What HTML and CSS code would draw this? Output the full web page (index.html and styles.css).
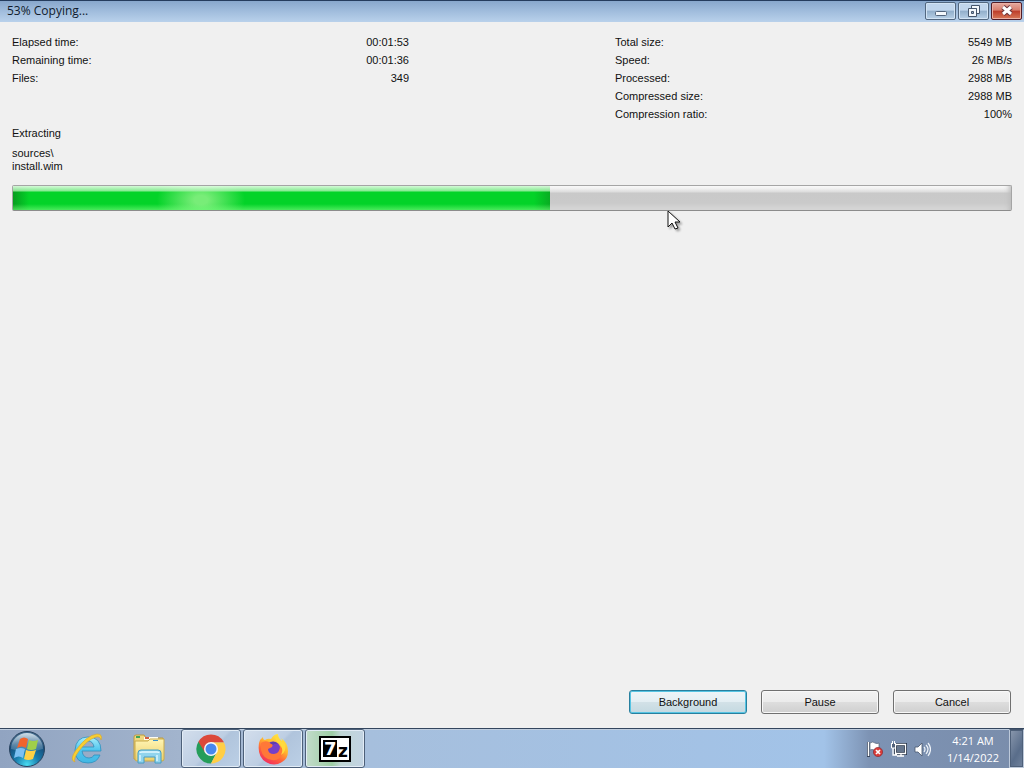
FILE: index.html
```html
<!DOCTYPE html>
<html lang="en">
<head>
<meta charset="utf-8">
<title>53% Copying...</title>
<link rel="stylesheet" href="styles.css">
</head>
<body>
<header class="titlebar">
  <h1 class="title">53% Copying...</h1>
  <div class="window-controls">
    <button class="wbtn" aria-label="Minimize"><svg width="30" height="16" viewBox="0 0 30 16"><rect x="9.500" y="8.500" width="11" height="4" rx="1" fill="#f4f8fc" stroke="#52647c"/></svg></button>
    <button class="wbtn" aria-label="Restore"><svg width="30" height="16" viewBox="0 0 30 16"><g fill="#f4f8fc" stroke="#46566c"><path d="M12.500 2.500h8v8h-8z"/><path d="M15.500 5.500h2v2h-2z" fill="#91aac8"/><path d="M9.500 5.500h8v8h-8z"/><path d="M12.500 8.500h2v2h-2z" fill="#91aac8"/></g></svg></button>
    <button class="wbtn wbtn-close" aria-label="Close"><svg width="29" height="16" viewBox="0 0 29 16"><path d="M11 4l8 7M19 4l-8 7" stroke="#693238" stroke-width="5"/><path d="M11 4l8 7M19 4l-8 7" stroke="#fff" stroke-width="3"/></svg></button>
  </div>
</header>
<main class="dialog">
  <section class="stats">
    <dl class="stat-list">
      <div class="stat"><dt>Elapsed time:</dt><dd>00:01:53</dd></div>
      <div class="stat"><dt>Remaining time:</dt><dd>00:01:36</dd></div>
      <div class="stat"><dt>Files:</dt><dd>349</dd></div>
    </dl>
    <dl class="stat-list">
      <div class="stat"><dt>Total size:</dt><dd>5549 MB</dd></div>
      <div class="stat"><dt>Speed:</dt><dd>26 MB/s</dd></div>
      <div class="stat"><dt>Processed:</dt><dd>2988 MB</dd></div>
      <div class="stat"><dt>Compressed size:</dt><dd>2988 MB</dd></div>
      <div class="stat"><dt>Compression ratio:</dt><dd>100%</dd></div>
    </dl>
  </section>
  <p class="status">Extracting</p>
  <p class="path">sources\<br>install.wim</p>
  <div class="progress" role="progressbar" aria-label="Copying" aria-valuemin="0" aria-valuemax="100" aria-valuenow="53">
    <div class="progress-fill" style="width: 53.8%"></div>
  </div>
  <div class="actions">
    <button class="btn btn-default">Background</button>
    <button class="btn">Pause</button>
    <button class="btn">Cancel</button>
  </div>
</main>
<footer class="taskbar">
  <button class="start" aria-label="Start">
    <svg width="38" height="38" viewBox="0 0 38 38">
      <defs>
        <radialGradient id="orb" cx=".5" cy=".95" r=".85"><stop offset="0" stop-color="#49dcf2"/><stop offset=".4" stop-color="#197eae"/><stop offset=".8" stop-color="#174c79"/><stop offset="1" stop-color="#426b8e"/></radialGradient>
        <linearGradient id="gloss" x2="0" y2="1"><stop offset="0" stop-color="#e7f2f8" stop-opacity=".85"/><stop offset="1" stop-color="#9fc0d6" stop-opacity=".2"/></linearGradient>
      </defs>
      <circle cx="19" cy="19" r="17.500" fill="url(#orb)" stroke="#29435f"/>
      <path d="M3 19a16 16 0 0 1 32 0q-16 5-32 0z" fill="url(#gloss)"/>
      <path d="M12 9q4-3 8 0l-2 9q-4-3-9 0z" fill="#f1642c"/>
      <path d="M21 10q4 2 9 0l-2 9q-5 2-9 0z" fill="#a0cf4a"/>
      <path d="M8 19q5-2 9 0l-2 9q-4-3-9 0z" fill="#7cc0f2"/>
      <path d="M18 20q5 2 10 0l-3 9q-5 2-9 0z" fill="#ffd144"/>
    </svg>
  </button>
  <nav class="tasks">
    <button class="task" aria-label="Internet Explorer">
      <svg width="34" height="34" viewBox="0 0 34 34">
        <defs><linearGradient id="ie" x2="0" y2="1"><stop offset="0" stop-color="#a8edfa"/><stop offset=".5" stop-color="#4fc5ee"/><stop offset="1" stop-color="#42b7e4"/></linearGradient></defs>
        <path d="M31 19H12q1 7 7 7 4 0 5-3h6q-3 8-12 8Q5 31 5 18 6 5 18 5q13 0 13 14zM12 15h12q-1-6-6-6t-6 6z" fill="url(#ie)" stroke="#2d8fbd" stroke-width=".8" fill-rule="evenodd"/>
        <path d="M5 30Q-1 28 6 18 17 3 27 2q6 0 4 6-1-4-5-3Q17 8 9 19 3 27 5 30z" fill="#f8ce31" stroke="#d6a52a" stroke-width=".6"/>
      </svg>
    </button>
    <button class="task" aria-label="Windows Explorer">
      <svg width="34" height="34" viewBox="0 0 34 34">
        <defs><linearGradient id="folder" x2="0" y2="1"><stop offset="0" stop-color="#fff5b5"/><stop offset="1" stop-color="#edcf69"/></linearGradient></defs>
        <path d="M2 5q0-2 2-2h8l2 3h17v21H2z" fill="#efd780" stroke="#bd9b42"/>
        <path d="M4 4h4v2H4z" fill="#40a559"/><path d="M12 5h14v3H12z" fill="#fffdf0"/><path d="M13 5h4v2h-4z" fill="#d26042"/>
        <path d="M3 9h13l2-2h14v20q0 2-2 2H5q-2 0-2-2z" fill="url(#folder)" stroke="#c9aa4c"/>
        <path d="M21 8h5v1h-5z" fill="#3c91cb"/>
        <path d="M6 31V21q0-3 3-3h17q3 0 3 3v10h-6v-6H12v6z" fill="#91d4ed" stroke="#459dc4"/>
        <path d="M8 21q0-1 2-1h15q2 0 2 1" fill="none" stroke="#e1f7ff" stroke-width="1.500"/>
        <path d="M8 23v6m17-6v6" stroke="#c6edfa" stroke-width="2"/>
      </svg>
    </button>
    <button class="task task-open" aria-label="Google Chrome">
      <svg width="30" height="30" viewBox="0 0 30 30">
        <path d="M15 15 2.400 7.700A14.500 14.500 0 0 1 27.600 7.700L28 8.500H15z" fill="#dc493b"/>
        <path d="M15 15 2.400 7.700A14.500 14.500 0 0 0 15 29.500L21 18z" fill="#259d5a"/>
        <path d="M15 8.500h13A14.500 14.500 0 0 1 15 29.500L21 18z" fill="#ffce45"/>
        <path d="M2.400 7.700 9 18.500 15 8.500z" fill="#dc493b"/>
        <circle cx="15" cy="15" r="7" fill="#f6f7fa"/><circle cx="15" cy="15" r="5.500" fill="#4788ee"/>
      </svg>
    </button>
    <button class="task task-open" aria-label="Firefox">
      <svg width="32" height="32" viewBox="0 0 32 32">
        <defs><linearGradient id="fox" x1=".8" y1="0" x2=".25" y2="1"><stop offset="0" stop-color="#fff14c"/><stop offset=".4" stop-color="#ffb72e"/><stop offset=".68" stop-color="#ff623a"/><stop offset="1" stop-color="#ef2665"/></linearGradient></defs>
        <path d="M2 10q1-4 4-6 0 3 2 3 3-2 6-1Q17 1 21 1q0 4 4 7 0-2-1-3 7 5 7 13 0 8-6 11-8 5-16 0Q0 24 2 10z" fill="url(#fox)"/>
        <circle cx="16" cy="16" r="7.500" fill="#7440c8"/>
        <path d="M4 10q4-3 8-1 1 2 4 2l-1 3-4 2q0 5 6 5 6-1 6-8 5 4 2 9-3 6-10 5Q6 26 4 17z" fill="#ff7838"/>
        <path d="M18 3q0 5 5 8 4 6 1 11 6-4 4-11-2-3-4-3-3-2-4-6z" fill="#ffda3c"/>
        <path d="M13 10q4-3 8 1-4-1-5 1z" fill="#5c3daf"/>
      </svg>
    </button>
    <button class="task task-open task-busy" aria-label="7-Zip">
      <svg width="32" height="26" viewBox="0 0 32 26">
        <rect width="32" height="26" fill="#000"/><rect x="2" y="2" width="28" height="22" fill="#fff"/><rect x="4" y="4" width="14" height="17" fill="#000"/>
        <text x="5" y="19" class="zip-seven">7</text><text x="19" y="21" class="zip-z">z</text>
      </svg>
    </button>
  </nav>
  <div class="tray">
    <svg width="17" height="18" viewBox="0 0 17 18"><path d="M2.500 2v15" stroke="#39465c" stroke-width="3"/><path d="M2.500 2v14" stroke="#fff" stroke-width="1.500"/><path d="M4 3q3-2 5 0 2 1 4 0v7q-3 1-5 0-2-1-4 0z" fill="#fff" stroke="#536177" stroke-width=".7"/><circle cx="12" cy="12" r="4.600" fill="#d93c39" stroke="#8e2932" stroke-width=".7"/><path d="m10 10 4 4m0-4-4 4" stroke="#fff" stroke-width="1.700"/></svg>
    <svg width="17" height="18" viewBox="0 0 17 18"><path d="M5.500 4.500h10v9h-10z" fill="#66768d" stroke="#29364a" stroke-width="3"/><path d="M5.500 4.500h10v9h-10zM7 16h7m-3-2v2M3 8v7h4" fill="none" stroke="#fff" stroke-width="1.300"/><path d="M1.500 3v5h4V3M2.500 1v3m2-3v3" fill="#53637b" stroke="#fff"/></svg>
    <svg width="17" height="18" viewBox="0 0 17 18"><path d="M1 7h3l4-4v13l-4-4H1z" fill="#fff" stroke="#47566d" stroke-width=".8"/><path d="M10 7q2 2 0 5m2-7q4 4 0 9m2-11q5 6 0 13" fill="none" stroke="#eef3f9" stroke-width="1.200"/></svg>
  </div>
  <div class="clock"><time>4:21 AM</time><time>1/14/2022</time></div>
  <button class="show-desktop" aria-label="Show desktop"></button>
</footer>
<svg class="cursor" width="16" height="22" viewBox="0 0 16 22" aria-hidden="true"><path d="M1 1v16l4-4 3 6 3-1-3-6h5z" fill="#fff" stroke="#111"/></svg>
</body>
</html>
```
FILE: styles.css
```css
* { box-sizing: border-box; }

body {
  margin: 0;
  min-height: 100vh;
  display: flex;
  flex-direction: column;
  background: #f0f0f0;
  color: #111;
  font: 11px/18px "Liberation Sans", Arial, sans-serif;
}

h1, p, dl, dd { margin: 0; }
button { padding: 0; font: inherit; color: inherit; }
svg { display: block; }

.titlebar {
  display: flex;
  justify-content: space-between;
  height: 22px;
  padding-left: 7px;
  border-top: 1px solid #253c5d;
  background: linear-gradient(#88a7cc, #a1bddd 50%, #b9d1eb);
}

.title {
  font: 12px/20px "Open Sans", "Noto Sans", sans-serif;
  color: #101b2c;
}

.window-controls {
  display: flex;
  gap: 2px;
  padding: 1px 2px 2px 0;
}

.wbtn {
  width: 31px;
  height: 18px;
  display: grid;
  place-items: center;
  border: 1px solid #52677f;
  border-radius: 2px;
  background: linear-gradient(#c0d5ec 45%, #91aeca 50%, #b8d0e7);
  box-shadow: inset 0 0 0 1px #d2e3f4;
}

.wbtn-close {
  border-color: #511d27;
  background: linear-gradient(#e5aaa0, #d87e6d 45%, #bd3c29 50%, #d87958);
  box-shadow: inset 0 0 0 1px #eab0a4;
}

.dialog {
  flex: 1;
  display: flex;
  flex-direction: column;
  padding: 11px 12px 14px;
}

.stats {
  display: grid;
  grid-template-columns: 1fr 1fr;
  column-gap: 206px;
}

.stat { display: flex; justify-content: space-between; }
.status { margin-top: 1px; }
.path { margin-top: 5px; line-height: 13px; }

.progress {
  height: 26px;
  margin-top: 12px;
  border: 1px solid #a5a5a5;
  border-bottom-color: #8c8c8c;
  border-radius: 2px;
  background: linear-gradient(#fff, #dcdcdc 6px, #c9c9c9 7px, #cacaca 17px, #d8d8d8);
  box-shadow: inset -5px 0 5px -3px #bdbdbd;
}

.progress-fill {
  height: 24px;
  background:
    linear-gradient(rgba(235, 255, 235, .9), rgba(165, 240, 170, .8) 5px, transparent 6px, transparent 18px, rgba(120, 250, 125, .6)),
    radial-gradient(ellipse 44px 30px at 188px 14px, #78ed78 15%, transparent 100%),
    linear-gradient(90deg, #079d20, #03d328 16px, #03d328 calc(100% - 16px), #08ad22);
}

.actions {
  display: flex;
  justify-content: flex-end;
  gap: 14px;
  margin-top: auto;
  padding-right: 1px;
}

.btn {
  width: 118px;
  height: 24px;
  border: 1px solid #707070;
  border-radius: 3px;
  background: linear-gradient(#f2f2f2, #ebebeb 50%, #dddddd 52%, #cfcfcf);
  box-shadow: inset 0 0 0 1px #f8f8f8;
}

.btn-default {
  border-color: #28809f;
  background: linear-gradient(#edf5f8, #e3eef3 50%, #d2e1e7 52%, #c4d9e1);
  box-shadow: inset 0 0 0 1px #56c4e3;
}

.taskbar {
  display: flex;
  align-items: stretch;
  height: 40px;
  border-top: 1px solid #34465e;
  background: linear-gradient(90deg, #91a4c1, #a2b4cd 180px, #a6bfdd 370px, #a2c3e8 calc(100% - 200px), #7d93b4 calc(100% - 155px), #7a8dab);
  box-shadow: inset 0 1px #c0cedf;
}

.start {
  width: 57px;
  padding-left: 8px;
  border: 0;
  background: none;
}

.tasks { display: flex; gap: 2px; }

.task {
  width: 60px;
  display: grid;
  place-items: center;
  border: 1px solid transparent;
  border-radius: 3px;
  background: none;
}

.task-open {
  border-color: #4d6079;
  background: linear-gradient(135deg, #d3deec, #bdcee3 50%, #b0c4dc 54%, #bcd0e6);
  box-shadow: inset 0 0 0 1px #e2ecf6;
}

.task-busy { background: linear-gradient(90deg, #c3dccb, #9dcda4 45%, #c0d6d5 60%, #c2d3e3); }

.zip-seven, .zip-z { font-family: "DejaVu Sans", sans-serif; font-weight: bold; }
.zip-seven { fill: #fff; font-size: 18px; }
.zip-z { fill: #000; font-size: 17px; }

.tray {
  display: flex;
  align-items: center;
  gap: 7px;
  margin-left: auto;
}

.clock {
  display: flex;
  flex-direction: column;
  width: 78px;
  padding: 3px 0 0 6px;
  text-align: center;
  color: #fff;
  font: 11px/17px "Open Sans", "Noto Sans", sans-serif;
}

.show-desktop {
  width: 15px;
  border: 1px solid #bdc9da;
  border-top-color: #43546d;
  outline: 1px solid #4e6079;
  outline-offset: -2px;
  background: linear-gradient(120deg, #8b99ae, #596d8a 60%, #71839d);
}

.cursor {
  position: absolute;
  left: 667px;
  top: 210px;
  filter: drop-shadow(2px 2px 1px rgba(0, 0, 0, .35));
}
```
